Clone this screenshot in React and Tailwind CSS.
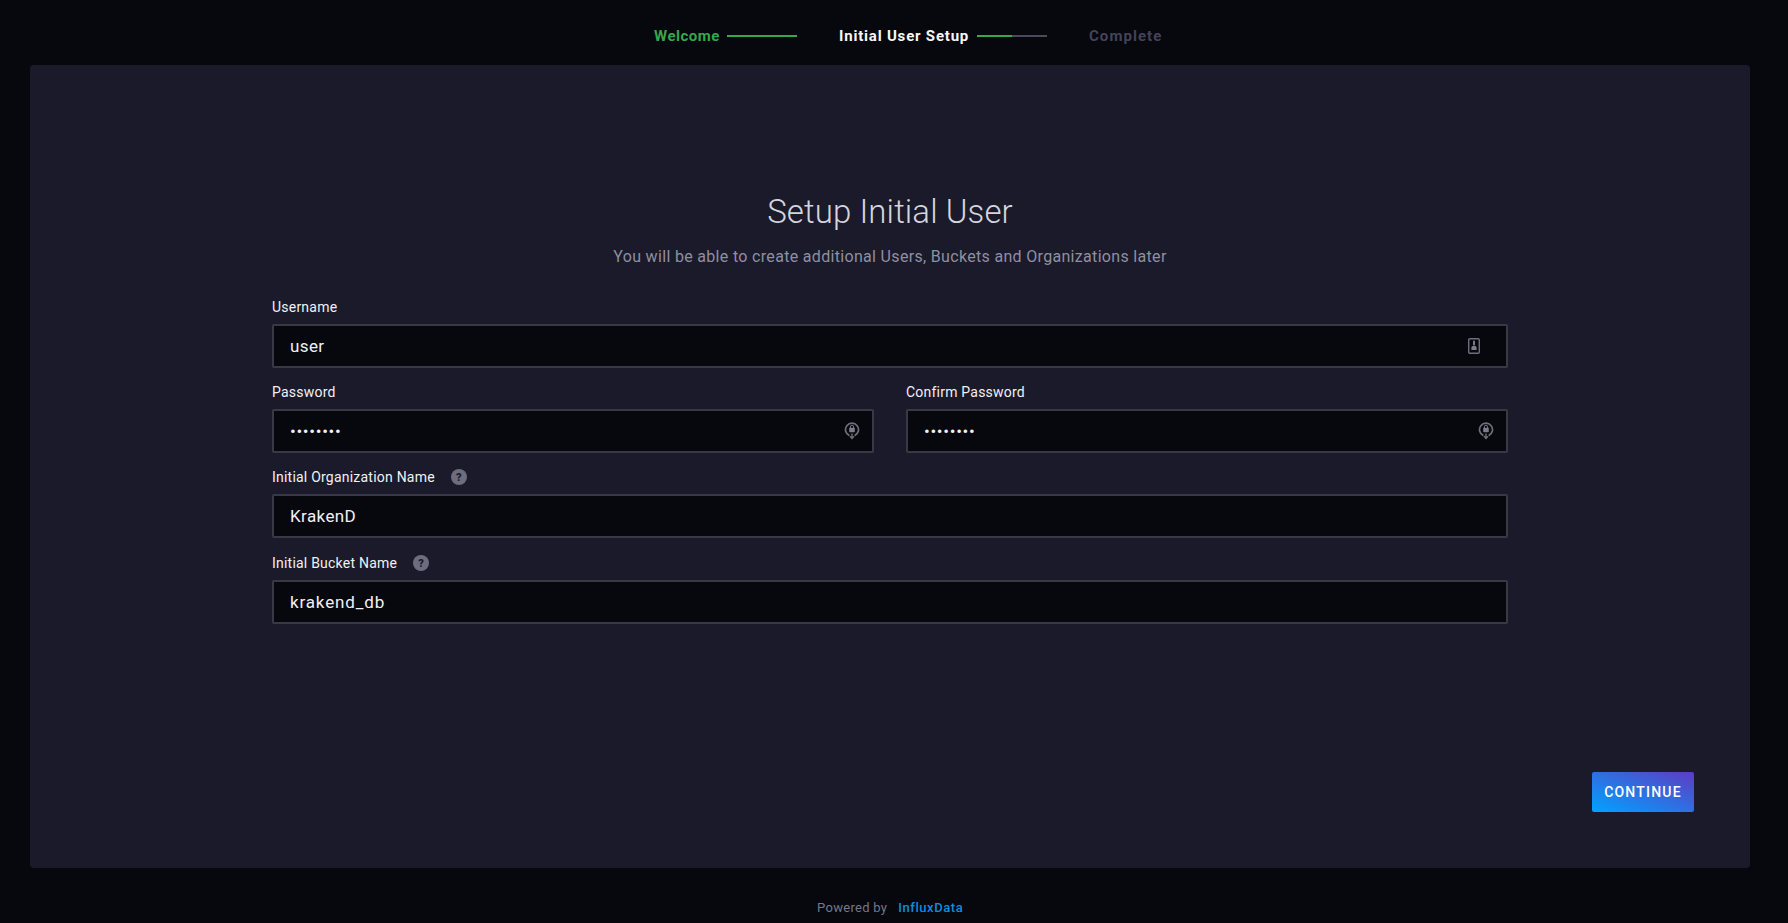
const F = "font-['Roboto',sans-serif]";

function UserIcon() {
  return (
    <svg width="12" height="16" viewBox="0 0 12 16" fill="none" className="absolute right-[28px] top-[14px]">
      <rect x="0.7" y="0.7" width="10.6" height="14.6" rx="1.2" stroke="#6f6f7c" strokeWidth="1.4" />
      <path d="M6 3.6 L6 6.6" stroke="#7d7d8a" strokeWidth="2" strokeLinecap="round" />
      <path d="M3.4 12 V9.6 Q3.4 7.8 6 7.8 Q8.6 7.8 8.6 9.6 V12 Z" fill="#7d7d8a" />
    </svg>
  );
}

function LockIcon() {
  return (
    <svg width="16" height="20" viewBox="0 0 16 20" fill="none" className="absolute right-[14px] top-[12px]">
      <path d="M5.4 14.6 A6.5 6.5 0 1 1 10.6 14.6" stroke="#6f6f7c" strokeWidth="1.7" />
      <rect x="5.2" y="6.8" width="5.6" height="4.4" rx="0.7" fill="#7d7d8a" />
      <path d="M6.4 7 V5.8 A1.6 1.6 0 0 1 9.6 5.8 V7" stroke="#7d7d8a" strokeWidth="1" />
      <path d="M8 12.6 V17 M6 15.2 L8 17.4 L10 15.2" stroke="#6f6f7c" strokeWidth="1.4" />
    </svg>
  );
}

function Help() {
  return (
    <span className={`ml-[16px] flex h-4 w-4 items-center justify-center rounded-full bg-[#6d6d80] text-[11px] font-black leading-none text-[#1a1a2a] ${F}`}>
      ?
    </span>
  );
}

function Field({ label, help, value, type = "text", icon, inputClass = "tracking-[0.4px]", className = "" }) {
  return (
    <div className={`flex min-w-0 flex-1 flex-col ${className}`}>
      <div className={`mb-[6px] flex h-[22px] items-center text-[14px] tracking-[0.22px] text-[#f1f1f3] ${F}`}>
        <label>{label}</label>
        {help && <Help />}
      </div>
      <div className="relative h-11">
        <input
          readOnly
          type={type}
          value={value}
          className={`h-11 w-full rounded-[2px] border-2 border-[#383846] bg-[#07070e] pl-4 pr-10 text-[17px] text-[#f1f1f3] outline-none ${inputClass} ${F}`}
        />
        {icon}
      </div>
    </div>
  );
}

function Step({ label, className = "" }) {
  return <span className={`text-[15px] font-bold ${F} ${className}`}>{label}</span>;
}

export default function App() {
  return (
    <div className={`flex h-[923px] w-[1788px] flex-col overflow-hidden bg-[#07070e] ${F}`}>
      <header className="flex h-[65px] pl-[654px] pt-[26px]">
        <div className="flex h-5 items-center">
          <Step label="Welcome" className="w-[73px] tracking-[0.5px] text-[#34a84a]" />
          <span className="h-[2px] w-[70px] bg-[#34a84a]" />
          <Step label="Initial User Setup" className="ml-[42px] w-[138px] tracking-[0.8px] text-[#f6f6f8]" />
          <span className="flex h-[2px] w-[70px] bg-[#4a4a5e]">
            <span className="h-full w-1/2 bg-[#34a84a]" />
          </span>
          <Step label="Complete" className="ml-[42px] tracking-[1.05px] text-[#434359]" />
        </div>
      </header>

      <main className="ml-[30px] flex h-[803px] w-[1720px] flex-col rounded-[4px] bg-[#1a1a2a]">
        <div className="flex flex-col items-center pt-[127px]">
          <h1 className="h-10 text-[33px] font-light leading-10 tracking-[0.1px] text-[#d5d5de]">Setup Initial User</h1>
          <p className="mt-[15px] h-5 text-[16px] leading-5 tracking-[0.32px] text-[#8f8fa1]">
            You will be able to create additional Users, Buckets and Organizations later
          </p>
        </div>

        <form className="mx-[242px] mt-[29px] flex flex-col gap-[13px]">
          <Field label="Username" value="user" icon={<UserIcon />} />
          <div className="flex gap-8">
            <Field label="Password" value="password" type="password" icon={<LockIcon />} inputClass="tracking-[0.7px]" />
            <Field label="Confirm Password" value="password" type="password" icon={<LockIcon />} inputClass="tracking-[0.7px]" />
          </div>
          <Field label="Initial Organization Name" help value="KrakenD" />
          <Field label="Initial Bucket Name" help value="krakend_db" inputClass="tracking-[0.85px]" className="mt-px" />
        </form>

        <div className="mr-14 mt-[148px] flex justify-end">
          <button
            type="button"
            className="h-10 w-[102px] rounded-[2px] bg-linear-to-tr/srgb from-[#00a3ff] to-[#5e3bc4] pt-px text-[14px] font-medium tracking-[1.2px] text-white"
          >
            CONTINUE
          </button>
        </div>
      </main>

      <footer className="flex h-[55px] items-center pl-[817px] pt-[25px] text-[13px]">
        <span className="tracking-[0.3px] text-[#757888]">Powered by</span>
        <a className="ml-[11px] font-medium tracking-[0.55px] text-[#0a8fe0]">InfluxData</a>
      </footer>
    </div>
  );
}
